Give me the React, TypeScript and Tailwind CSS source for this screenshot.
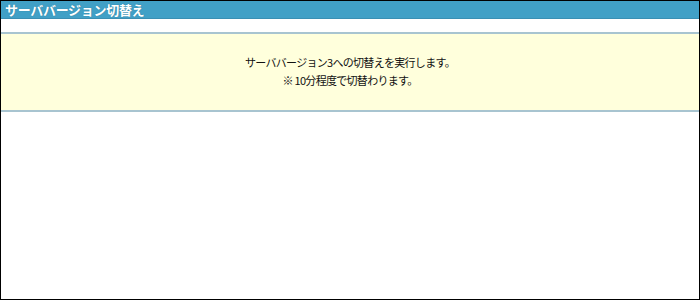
export default function App() {
  return (
    <div className="w-[700px] h-[300px] border border-black bg-white flex flex-col" style={{ fontFamily: '"Noto Sans CJK JP", sans-serif' }}>
      <div className="h-[18px] bg-[#41a0c6] border-b border-[#3a8fb3] flex items-center px-[4px]">
        <span className="text-white font-bold text-[13px] leading-none [text-shadow:0_0_1px_#1f6f90] tracking-[-0.3px]">サーババージョン切替え</span>
      </div>
      <div className="h-[13px]" />
      <div className="bg-[#ffffdc] border-t-2 border-b-2 border-[#a8c4d0] pt-[19px] pb-[21px] text-center text-[11px] leading-[18px] text-[#111] tracking-[-0.7px]">
        <p>サーババージョン3への切替えを実行します。</p>
        <p>※ 10分程度で切替わります。</p>
      </div>
    </div>
  )
}
